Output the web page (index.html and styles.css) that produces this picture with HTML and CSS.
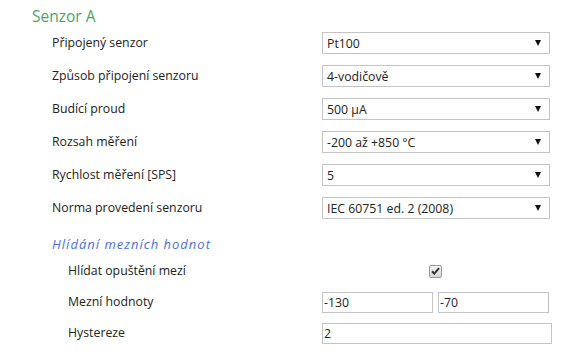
FILE: index.html
```html
<!DOCTYPE html>
<html lang="cs">
<head>
    <meta charset="UTF-8">
    <meta name="viewport" content="width=device-width, initial-scale=1.0">
    <title>Senzor A</title>
    <link rel="stylesheet" href="styles.css">
</head>
<body>
    <div class="panel">
        <h2 class="title">Senzor A</h2>

        <div class="form">
            <label class="label">Připojený senzor</label>
            <div class="select-wrap">
                <select><option>Pt100</option></select>
            </div>

            <label class="label">Způsob připojení senzoru</label>
            <div class="select-wrap">
                <select><option>4-vodičově</option></select>
            </div>

            <label class="label">Budící proud</label>
            <div class="select-wrap">
                <select><option>500 µA</option></select>
            </div>

            <label class="label">Rozsah měření</label>
            <div class="select-wrap">
                <select><option>-200 až +850 °C</option></select>
            </div>

            <label class="label">Rychlost měření [SPS]</label>
            <div class="select-wrap">
                <select><option>5</option></select>
            </div>

            <label class="label">Norma provedení senzoru</label>
            <div class="select-wrap">
                <select><option>IEC 60751 ed. 2 (2008)</option></select>
            </div>
        </div>

        <h3 class="subtitle">Hlídání mezních hodnot</h3>

        <div class="form sub">
            <label class="label">Hlídat opuštění mezí</label>
            <div class="check-cell">
                <span class="check">
                    <svg width="9" height="8" viewBox="0 0 9 8"><path d="M1 4.2 L3.3 6.6 L8 1.2" fill="none" stroke="#333" stroke-width="2"/></svg>
                </span>
            </div>

            <label class="label">Mezní hodnoty</label>
            <div class="pair">
                <input type="text" value="-130">
                <input type="text" value="-70">
            </div>

            <label class="label">Hystereze</label>
            <div class="single">
                <input type="text" value="2">
            </div>
        </div>
    </div>
</body>
</html>
```

FILE: styles.css
```css
body {
    margin: 0;
    font-family: "Open Sans", Arial, sans-serif;
    font-size: 12.3px;
    color: #222;
    background-color: #fff;
}
.panel {
    padding: 6px 0 0 32px;
}
.title {
    margin: 0 0 6px 0;
    font-size: 15.5px;
    font-weight: normal;
    color: #4aa564;
    line-height: 20px;
}
.form {
    display: grid;
    grid-template-columns: 270px 228px;
    row-gap: 11px;
    padding-left: 20px;
    align-items: center;
}
.label {
    line-height: 22px;
}
.select-wrap {
    position: relative;
}
.select-wrap select {
    appearance: none;
    -webkit-appearance: none;
    width: 100%;
    height: 22px;
    margin: 0;
    padding: 0 20px 0 4px;
    border: 1px solid #c4c4c4;
    border-radius: 0;
    background-color: #fff;
    font-family: inherit;
    font-size: inherit;
    color: #222;
}
.select-wrap::after {
    content: "";
    position: absolute;
    right: 9px;
    top: 8px;
    border-left: 3px solid transparent;
    border-right: 3px solid transparent;
    border-top: 6px solid #111;
    pointer-events: none;
}
.subtitle {
    margin: 15px 0 6px 20px;
    font-size: 13px;
    font-weight: normal;
    font-style: italic;
    letter-spacing: 1px;
    color: #4a6fe0;
    line-height: 20px;
}
.form.sub {
    grid-template-columns: 254px 230px;
    padding-left: 36px;
    row-gap: 9px;
}
.sub .label {
    line-height: 22px;
}
.check-cell {
    display: flex;
    justify-content: center;
    padding-right: 4px;
}
.check {
    display: flex;
    align-items: center;
    justify-content: center;
    width: 11px;
    height: 11px;
    border: 1px solid #9a9a9a;
    border-radius: 2px;
    background: linear-gradient(#f4f4f4, #d8d8d8);
}
.pair {
    display: flex;
    gap: 5px;
    width: 227px;
}
.pair input,
.single input {
    box-sizing: border-box;
    width: 100%;
    min-width: 0;
    height: 21px;
    margin: 0;
    padding: 0 1px;
    border: 1px solid #c4c4c4;
    font-family: inherit;
    font-size: inherit;
    color: #222;
    outline: none;
}
```
